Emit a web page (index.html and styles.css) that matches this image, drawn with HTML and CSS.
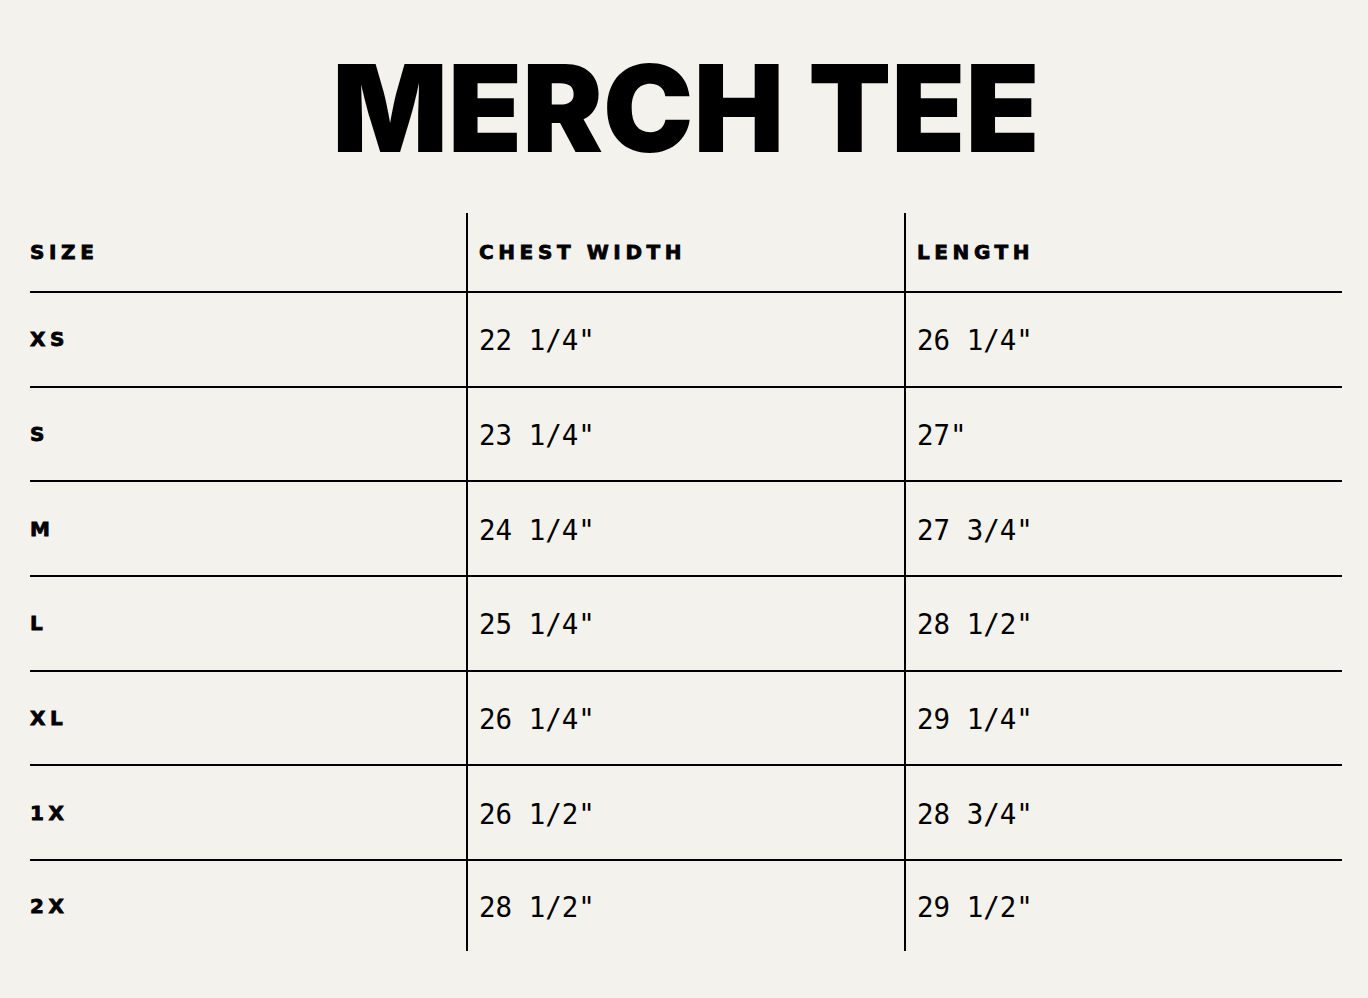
FILE: index.html
```html
<!DOCTYPE html>
<html lang="en">
<head>
<meta charset="utf-8">
<title>Merch Tee Size Chart</title>
<link rel="stylesheet" href="styles.css">
</head>
<body>
<main class="page">
  <h1 class="title">MERCH TEE</h1>
  <div class="chart" role="table">
    <div class="row head" role="row">
      <div class="cell" role="columnheader">SIZE</div>
      <div class="cell" role="columnheader">CHEST WIDTH</div>
      <div class="cell" role="columnheader">LENGTH</div>
    </div>
    <div class="row" role="row">
      <div class="cell size" role="cell">XS</div>
      <div class="cell val" role="cell">22 1/4"</div>
      <div class="cell val" role="cell">26 1/4"</div>
    </div>
    <div class="row" role="row">
      <div class="cell size" role="cell">S</div>
      <div class="cell val" role="cell">23 1/4"</div>
      <div class="cell val" role="cell">27"</div>
    </div>
    <div class="row" role="row">
      <div class="cell size" role="cell">M</div>
      <div class="cell val" role="cell">24 1/4"</div>
      <div class="cell val" role="cell">27 3/4"</div>
    </div>
    <div class="row" role="row">
      <div class="cell size" role="cell">L</div>
      <div class="cell val" role="cell">25 1/4"</div>
      <div class="cell val" role="cell">28 1/2"</div>
    </div>
    <div class="row" role="row">
      <div class="cell size" role="cell">XL</div>
      <div class="cell val" role="cell">26 1/4"</div>
      <div class="cell val" role="cell">29 1/4"</div>
    </div>
    <div class="row" role="row">
      <div class="cell size" role="cell">1X</div>
      <div class="cell val" role="cell">26 1/2"</div>
      <div class="cell val" role="cell">28 3/4"</div>
    </div>
    <div class="row last" role="row">
      <div class="cell size" role="cell">2X</div>
      <div class="cell val" role="cell">28 1/2"</div>
      <div class="cell val" role="cell">29 1/2"</div>
    </div>
  </div>
</main>
</body>
</html>
```

FILE: styles.css
```css
html, body {
  margin: 0;
  padding: 0;
  background: #f3f2ed;
  color: #000;
}

.page {
  padding: 48px 26px 0 30px;
}

.title {
  margin: 0;
  font-family: "Inter", "Liberation Sans", sans-serif;
  font-weight: 900;
  font-size: 121px;
  line-height: 1;
  text-align: center;
  letter-spacing: 0;
  height: 165px;
}

.chart {
  width: 1312px;
}

.row {
  display: grid;
  grid-template-columns: 436px 438px 438px;
  height: 92.67px;
  border-bottom: 2px solid #000;
}

.row.head {
  height: 78px;
}

.row.last {
  border-bottom: none;
  height: 90px;
}

.cell {
  display: flex;
  align-items: center;
}

.cell + .cell {
  border-left: 2px solid #000;
  padding-left: 11px;
}

.head .cell,
.size {
  font-family: "DejaVu Sans", "Liberation Sans", sans-serif;
  font-weight: 700;
  font-size: 20px;
  letter-spacing: 4.6px;
  -webkit-text-stroke: 0.8px #000;
}

.val {
  font-family: "DejaVu Sans Mono", "Liberation Mono", monospace;
  font-size: 27.5px;
  padding-top: 2px;
}
```
